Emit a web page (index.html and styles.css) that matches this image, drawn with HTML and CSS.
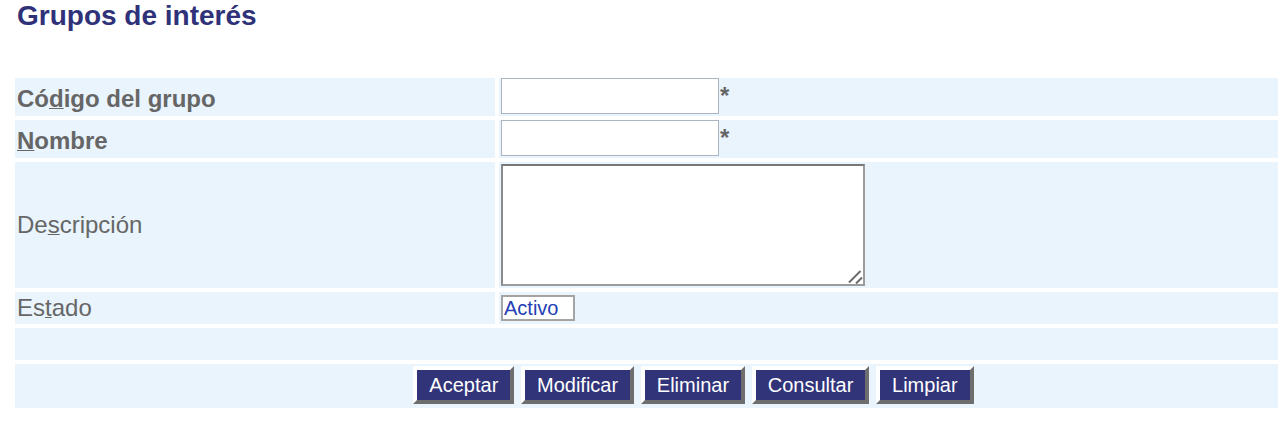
FILE: index.html
```html
<!DOCTYPE html>
<html lang="es">
<head>
<meta charset="utf-8">
<title>Grupos de interés</title>
<link rel="stylesheet" href="styles.css">
</head>
<body>
<div class="page">
  <h1 class="title">Grupos de interés</h1>
  <form class="form">
    <div class="cell label label-req"><label for="codigo">Có<u>d</u>igo del grupo</label></div>
    <div class="cell field"><input id="codigo" class="text-input" type="text"><span class="asterisk">*</span></div>

    <div class="cell label label-req"><label for="nombre"><u>N</u>ombre</label></div>
    <div class="cell field"><input id="nombre" class="text-input" type="text"><span class="asterisk">*</span></div>

    <div class="cell label"><label for="descripcion">De<u>s</u>cripción</label></div>
    <div class="cell field field-area">
      <div class="area-wrap">
        <textarea id="descripcion" class="text-area"></textarea>
        <svg class="grip" width="16" height="16" viewBox="0 0 16 16" aria-hidden="true">
          <rect x="0" y="0" width="16" height="16" fill="#ffffff"/>
          <line x1="2" y1="14.5" x2="13.5" y2="3" stroke="#6a6a6a" stroke-width="2"/>
          <line x1="9" y1="15.5" x2="15" y2="9.5" stroke="#6a6a6a" stroke-width="2"/>
        </svg>
      </div>
    </div>

    <div class="cell label"><label for="estado">Es<u>t</u>ado</label></div>
    <div class="cell field field-select"><select id="estado" class="select"><option>Activo</option><option>Inactivo</option></select></div>

    <div class="cell wide"></div>

    <div class="cell wide actions">
      <button type="button" class="btn">Aceptar</button>
      <button type="button" class="btn">Modificar</button>
      <button type="button" class="btn">Eliminar</button>
      <button type="button" class="btn">Consultar</button>
      <button type="button" class="btn">Limpiar</button>
    </div>
  </form>
</div>
</body>
</html>
```
FILE: styles.css
```css
html, body {
  margin: 0;
  padding: 0;
  background: #ffffff;
}

.page {
  overflow: hidden;
  font-family: "Liberation Sans", Arial, sans-serif;
  min-height: 432px;
}

.title {
  margin: 0;
  padding-left: 17px;
  font-size: 28px;
  line-height: 32px;
  font-weight: bold;
  color: #2f3279;
}

.form {
  display: grid;
  width: 1357px;
  margin: 46px 0 0 15px;
  grid-template-columns: 480px 1fr;
  grid-template-rows: 38px 38px 126px 32px 32px 44px;
  gap: 4px;
}

.cell {
  background: #e9f4fd;
  box-sizing: border-box;
}

.wide {
  grid-column: 1 / span 2;
}

.label {
  display: flex;
  align-items: center;
  padding-left: 2px;
  font-size: 24px;
  color: #666666;
}

.label-req {
  font-weight: bold;
  padding-top: 3px;
}

.label u {
  text-decoration-thickness: 1px;
}

.field {
  display: flex;
  align-items: flex-start;
  padding-left: 2px;
}

.text-input {
  box-sizing: border-box;
  width: 218px;
  height: 36px;
  margin: 0;
  border: 1px solid #abb4bf;
  background: #ffffff;
  font-family: "Liberation Sans", Arial, sans-serif;
  font-size: 20px;
  padding: 0 4px;
}

.asterisk {
  margin-top: 4px;
  font-size: 24px;
  font-weight: bold;
  color: #666666;
  line-height: 27px;
  padding-left: 1px;
}

.field-area {
  padding-top: 2px;
}

.area-wrap {
  position: relative;
  width: 364px;
  height: 122px;
}

.text-area {
  display: block;
  box-sizing: border-box;
  width: 364px;
  height: 122px;
  margin: 0;
  border: 2px solid #9c9c9c;
  border-top-color: #777777;
  border-left-color: #8a8a8a;
  background: #ffffff;
  font-family: "Liberation Sans", Arial, sans-serif;
  font-size: 20px;
}

.grip {
  position: absolute;
  right: 2px;
  bottom: 2px;
  pointer-events: none;
}

.field-select {
  padding-top: 3px;
}

.select {
  appearance: none;
  -webkit-appearance: none;
  box-sizing: border-box;
  width: 74px;
  height: 26px;
  margin: 0;
  padding: 0 0 0 1px;
  border: 2px solid #a4a4a4;
  border-radius: 0;
  background: #ffffff;
  color: #2340b4;
  font-family: "Liberation Sans", Arial, sans-serif;
  font-size: 20px;
  line-height: 22px;
}

.actions {
  display: flex;
  justify-content: center;
  align-items: flex-start;
  gap: 6.7px;
  padding-top: 2px;
}

.btn {
  box-sizing: border-box;
  height: 38px;
  margin: 0;
  padding: 4px 12px 3px;
  border: 4px solid;
  border-color: #ffffff #6e6e6e #6e6e6e #ffffff;
  background: #313479;
  color: #ffffff;
  font-family: "Liberation Sans", Arial, sans-serif;
  font-size: 20px;
  line-height: 23px;
  cursor: pointer;
}
```
